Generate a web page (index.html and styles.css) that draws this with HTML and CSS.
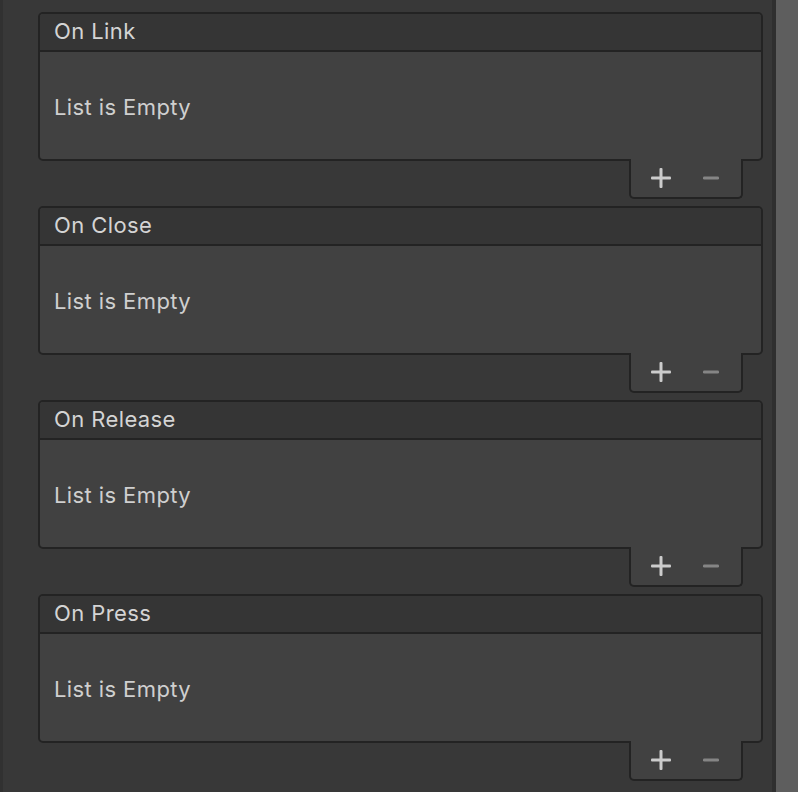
FILE: index.html
```html
<!DOCTYPE html>
<html>
<head>
<meta charset="utf-8">
<link rel="stylesheet" href="styles.css">
</head>
<body>
<div class="page">
  <div class="edge"></div>
  <div class="content">
    <section class="event">
      <div class="box">
        <div class="box-header">On Link</div>
        <div class="box-body">List is Empty</div>
      </div>
      <div class="footer">
        <span class="btn"><svg width="20" height="20" viewBox="0 0 20 20"><rect x="8.5" y="0" width="3" height="20" rx="1" fill="#cccccc"/><rect x="0" y="8.5" width="20" height="3" rx="1" fill="#cccccc"/></svg></span>
        <span class="btn"><svg width="16" height="4" viewBox="0 0 16 4"><rect x="0" y="0.5" width="16" height="3" rx="1.2" fill="#858585"/></svg></span>
      </div>
    </section>
    <section class="event">
      <div class="box">
        <div class="box-header">On Close</div>
        <div class="box-body">List is Empty</div>
      </div>
      <div class="footer">
        <span class="btn"><svg width="20" height="20" viewBox="0 0 20 20"><rect x="8.5" y="0" width="3" height="20" rx="1" fill="#cccccc"/><rect x="0" y="8.5" width="20" height="3" rx="1" fill="#cccccc"/></svg></span>
        <span class="btn"><svg width="16" height="4" viewBox="0 0 16 4"><rect x="0" y="0.5" width="16" height="3" rx="1.2" fill="#858585"/></svg></span>
      </div>
    </section>
    <section class="event">
      <div class="box">
        <div class="box-header">On Release</div>
        <div class="box-body">List is Empty</div>
      </div>
      <div class="footer">
        <span class="btn"><svg width="20" height="20" viewBox="0 0 20 20"><rect x="8.5" y="0" width="3" height="20" rx="1" fill="#cccccc"/><rect x="0" y="8.5" width="20" height="3" rx="1" fill="#cccccc"/></svg></span>
        <span class="btn"><svg width="16" height="4" viewBox="0 0 16 4"><rect x="0" y="0.5" width="16" height="3" rx="1.2" fill="#858585"/></svg></span>
      </div>
    </section>
    <section class="event">
      <div class="box">
        <div class="box-header">On Press</div>
        <div class="box-body">List is Empty</div>
      </div>
      <div class="footer">
        <span class="btn"><svg width="20" height="20" viewBox="0 0 20 20"><rect x="8.5" y="0" width="3" height="20" rx="1" fill="#cccccc"/><rect x="0" y="8.5" width="20" height="3" rx="1" fill="#cccccc"/></svg></span>
        <span class="btn"><svg width="16" height="4" viewBox="0 0 16 4"><rect x="0" y="0.5" width="16" height="3" rx="1.2" fill="#858585"/></svg></span>
      </div>
    </section>
  </div>
  <div class="gutter"></div>
  <div class="scrollbar"></div>
</div>
</body>
</html>
```
FILE: styles.css
```css
* { box-sizing: border-box; }
html, body { margin: 0; padding: 0; height: 100%; }
body {
  background: #383838;
  font-family: Inter, "Noto Sans", sans-serif;
  color: #d2d2d2;
  overflow: hidden;
}
.page {
  display: flex;
  height: 792px;
  width: 798px;
}
.edge {
  width: 3px;
  background: #313131;
}
.content {
  flex: 1;
  padding: 12px 9px 0 35px;
  display: flex;
  flex-direction: column;
  gap: 7px;
}
.gutter {
  width: 4px;
  background: #2f2f2f;
}
.scrollbar {
  width: 22px;
  background: #5e5e5e;
}
.event {
  display: flex;
  flex-direction: column;
}
.box {
  border: 2px solid #232323;
  border-radius: 5px;
  background: #414141;
  overflow: hidden;
}
.box-header {
  height: 38px;
  background: #353535;
  border-bottom: 2px solid #232323;
  padding-left: 14px;
  font-size: 22px;
  letter-spacing: 0.4px;
  line-height: 35px;
  color: #d4d4d4;
}
.box-body {
  height: 107px;
  display: flex;
  align-items: center;
  padding: 3px 0 0 14px;
  font-size: 22px;
  letter-spacing: 0.4px;
  color: #cfcfcf;
}
.footer {
  align-self: flex-end;
  margin-right: 20px;
  margin-top: -2px;
  width: 114px;
  height: 40px;
  background: #414141;
  border: 2px solid #232323;
  border-top: none;
  border-radius: 0 0 5px 5px;
  display: flex;
  padding: 0 5px;
  position: relative;
}
.btn {
  width: 50px;
  display: flex;
  align-items: center;
  justify-content: center;
}
```
